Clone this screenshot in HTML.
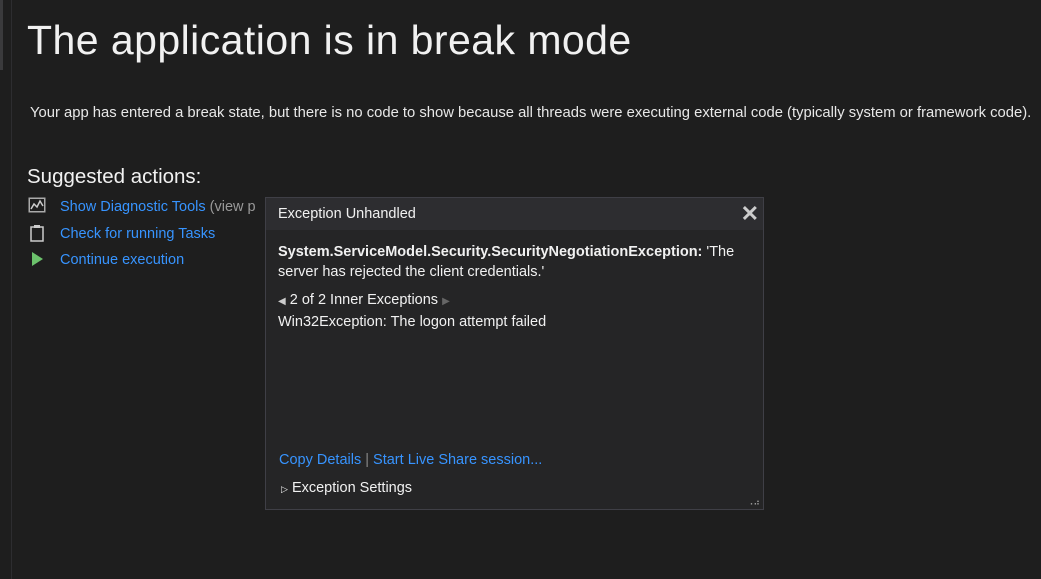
<!DOCTYPE html>
<html><head><style>
body{margin:0;width:1041px;height:579px;background:#1e1e1e;overflow:hidden;font-family:"Liberation Sans",sans-serif;color:#f1f1f1;position:relative}
.l1{position:absolute;left:0;top:0;width:3px;height:70px;background:#3a3a3c}
.l2{position:absolute;left:11px;top:0;width:1px;height:579px;background:#2d2d30}
.t{position:absolute;left:27px;top:17px;font-size:41px;font-weight:300;white-space:nowrap;letter-spacing:0.45px}
.p{position:absolute;left:30px;top:105px;font-size:14.8px;white-space:nowrap;color:#e8e8e8}
.sa{position:absolute;left:27px;top:165px;font-size:20.5px;white-space:nowrap}
.a{position:absolute;left:60px;font-size:14.5px;color:#3794ff;white-space:nowrap}
.gray{color:#999}
.pop{position:absolute;left:265px;top:197px;width:499px;height:313px;background:#252526;border:1px solid #3f3f46;box-sizing:border-box}
.hd{height:32px;background:#2d2d30;font-size:14.5px;line-height:32px;padding-left:12px;position:relative}
.x{position:absolute;right:4px;top:0;font-size:22px;color:#ccc;font-weight:bold}
.bd{padding:12px 12px;font-size:14.5px;line-height:20px}
</style></head><body>
<div class="l1"></div><div class="l2"></div>
<div class="t">The application is in break mode</div>
<div class="p">Your app has entered a break state, but there is no code to show because all threads were executing external code (typically system or framework code).</div>
<div class="sa">Suggested actions:</div>
<svg style="position:absolute;left:28px;top:197px" width="18" height="16"><rect x="0.5" y="0.5" width="17" height="15" fill="#aaa"/><rect x="2" y="2" width="14" height="12" fill="#1e1e1e"/><polyline points="3,12 6,7 9,10 12,4 15,9" fill="none" stroke="#ccc" stroke-width="1.5"/></svg>
<div class="a" style="top:199px">Show Diagnostic Tools <span class="gray">(view p</span></div>
<svg style="position:absolute;left:30px;top:224px" width="14" height="18"><rect x="1" y="3" width="12" height="14" fill="none" stroke="#ccc" stroke-width="1.5"/><rect x="4" y="1" width="6" height="3" fill="#ccc"/></svg>
<div class="a" style="top:226px">Check for running Tasks</div>
<svg style="position:absolute;left:32px;top:252px" width="12" height="14"><polygon points="0,0 11,7 0,14" fill="#6cc26c"/></svg>
<div class="a" style="top:252px">Continue execution</div>
<div class="pop">
<div class="hd">Exception Unhandled<span class="x">✕</span></div>
<div class="bd">
<div><b>System.ServiceModel.Security.SecurityNegotiationException:</b> 'The server has rejected the client credentials.'</div>
<div style="margin-top:8px"><span style="font-size:10px;color:#ccc">◀</span> 2 of 2 Inner Exceptions <span style="font-size:10px;color:#666">▶</span></div>
<div>Win32Exception: The logon attempt failed</div>
</div>
<div style="position:absolute;left:13px;top:254px;font-size:14.5px;color:#3794ff;white-space:nowrap">Copy Details <span style="color:#888">|</span> Start Live Share session...</div>
<div style="position:absolute;left:15px;top:282px;font-size:14.5px;white-space:nowrap"><span style="font-size:9px">▷</span> Exception Settings</div>
<div style="position:absolute;right:3px;bottom:3px;font-size:9px;color:#aaa;line-height:8px">⠠⠴</div>
</div>
</body></html>
